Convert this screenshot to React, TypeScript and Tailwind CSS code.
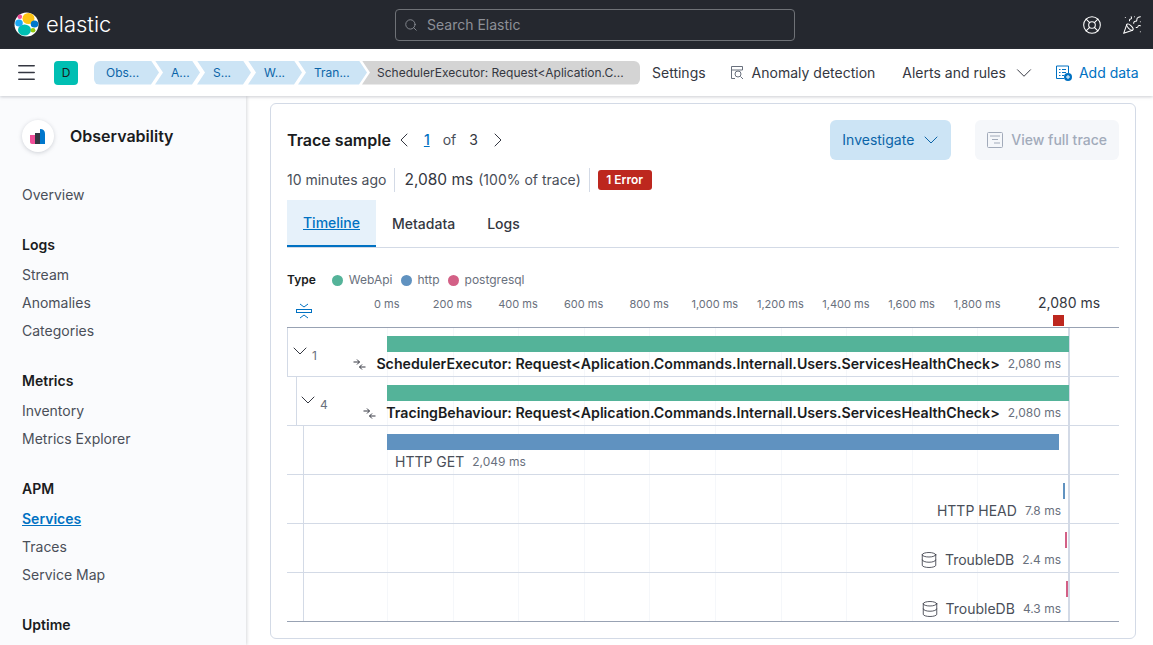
import * as React from "react";
import { ChevronDown, ChevronLeft, ChevronRight, Database, LifeBuoy, Menu, PartyPopper, Search } from "lucide-react";

const crumbs = [
  { label: "Obs...", cls: "w-[65px] pl-3 rounded-l-md [clip-path:polygon(0_0,calc(100%-8px)_0,100%_50%,calc(100%-8px)_100%,0_100%)]" },
  { label: "A...", cls: "w-[45px] -ml-[4px] pl-4 [clip-path:polygon(0_0,calc(100%-8px)_0,100%_50%,calc(100%-8px)_100%,0_100%,8px_50%)]" },
  { label: "S...", cls: "w-[54px] -ml-[3px] pl-4 [clip-path:polygon(0_0,calc(100%-8px)_0,100%_50%,calc(100%-8px)_100%,0_100%,8px_50%)]" },
  { label: "W...", cls: "w-[54px] -ml-[3px] pl-4 [clip-path:polygon(0_0,calc(100%-8px)_0,100%_50%,calc(100%-8px)_100%,0_100%,8px_50%)]" },
  { label: "Tran...", cls: "w-[69px] -ml-[4px] pl-4 [clip-path:polygon(0_0,calc(100%-8px)_0,100%_50%,calc(100%-8px)_100%,0_100%,8px_50%)]" },
];

const nav = [
  { items: ["Overview"] },
  { title: "Logs", items: ["Stream", "Anomalies", "Categories"] },
  { title: "Metrics", items: ["Inventory", "Metrics Explorer"] },
  { title: "APM", items: ["Services", "Traces", "Service Map"] },
  { title: "Uptime", items: [] },
];

const ticks = ["0 ms", "200 ms", "400 ms", "600 ms", "800 ms", "1,000 ms", "1,200 ms", "1,400 ms", "1,600 ms", "1,800 ms"];

function Logo() {
  return (
    <svg width="25" height="25" viewBox="0 0 25 25">
      <circle cx="12.5" cy="12.5" r="12" fill="#fff" />
      <ellipse cx="14.5" cy="6.5" rx="6" ry="5.5" fill="#fec514" />
      <ellipse cx="10.5" cy="18" rx="6.5" ry="5.5" fill="#00bfb3" />
      <ellipse cx="5" cy="11" rx="3.8" ry="3.6" fill="#1ba9f5" />
      <ellipse cx="5.8" cy="4.8" rx="2.3" ry="2.2" fill="#f04e98" />
      <ellipse cx="20.5" cy="12" rx="3.8" ry="3.6" fill="#0077cc" />
      <ellipse cx="19" cy="18.3" rx="2.4" ry="2.3" fill="#93c90e" />
    </svg>
  );
}

function SpanIcon() {
  return (
    <svg className="block" width="13" height="13" viewBox="0 0 13 13" fill="none" stroke="#343741" strokeWidth="1">
      <path d="M0.5 4H6.5M4 1.5L6.5 4L4 6.5" />
      <path d="M12.5 9H6.5M9 6.5L6.5 9L9 11.5" />
    </svg>
  );
}

function Row({ indent, count, icon, label, bold, duration, barLeft, barWidth, barColor, labelLeft, line }: {
  indent?: number; count?: number; icon?: "span" | "db"; label: string; bold?: boolean; duration: string;
  barLeft: string; barWidth: string; barColor: string; labelLeft?: boolean; line: string;
}) {
  return (
    <div className="relative h-[49px] pt-[8px] border-b border-[#d3dae6]">
      <div className={`absolute top-0 bottom-0 w-px bg-[#d3dae6] ${line}`} />
      {count !== undefined && (
        <div className={`absolute top-[11px] flex items-start text-xs text-[#69707d] ${indent ? "left-[9px]" : "left-[1px]"}`}>
          <ChevronDown size={24} strokeWidth={1} color="#343741" />
          <span className="mt-[9px]">{count}</span>
        </div>
      )}
      <div className={`h-4 ${barLeft} ${barWidth} ${barColor}`} />
      <div className={`flex items-center h-[20px] mt-[2px] whitespace-nowrap ${labelLeft ? "justify-start pl-[108px]" : "justify-end pr-[58px]"}`}>
        {icon === "span" && <span className="mr-[10px]"><SpanIcon /></span>}
        {icon === "db" && <Database size={18} strokeWidth={1.1} color="#343741" className="mr-[7px]" />}
        <span className={bold ? "text-[14.2px] font-semibold text-[#1a1c21]" : "text-sm text-[#4a4f59]"}>{label}</span>
        <span className="ml-[8px] text-xs text-[#69707d]">{duration}</span>
      </div>
    </div>
  );
}

export default function App() {
  return (
    <div className="flex flex-col h-[645px] w-[1153px] overflow-hidden bg-white font-['Inter',sans-serif] text-sm text-[#343741]">
      <header className="flex items-center h-[49px] shrink-0 bg-[#25282f] pl-[14px] pr-[11px]">
        <Logo />
        <span className="ml-[7px] w-[349px] text-[22px] font-light leading-none -mt-[2px] text-white">elastic</span>
        <div className="flex items-center gap-[9px] w-[400px] h-8 px-2 border border-[#6f7277] rounded-[4px] text-[#8d9097]">
          <Search size={14} strokeWidth={1.5} />
          <span>Search Elastic</span>
        </div>
        <div className="flex items-center gap-[20px] ml-auto text-white">
          <LifeBuoy size={20} strokeWidth={1.25} />
          <PartyPopper size={20} strokeWidth={1.25} />
        </div>
      </header>

      <div className="z-20 flex items-center h-[47px] shrink-0 bg-white pl-[15px] pr-[13px] shadow-[0_1px_3px_rgba(105,112,125,0.35)]">
        <Menu size={23} strokeWidth={1.7} />
        <div className="flex items-center justify-center w-6 h-6 ml-[16px] rounded-[4px] bg-[#00bfb3] text-xs text-[#1a1c21]">D</div>
        <div className="flex items-center ml-4 text-xs">
          {crumbs.map((c) => (
            <div key={c.label} className={`flex items-center h-6 bg-[#cce4f5] text-[#0b64a8] ${c.cls}`}>{c.label}</div>
          ))}
          <div className="flex items-center w-[278px] h-6 -ml-[5px] pl-[15px] rounded-r-md bg-[#d4d4d4] text-[#343741] [clip-path:polygon(0_0,100%_0,100%_100%,0_100%,8px_50%)]">
            SchedulerExecutor: Request&lt;Aplication.C...
          </div>
        </div>
        <span className="ml-[12px]">Settings</span>
        <svg className="ml-[25px]" width="13" height="13" viewBox="0 0 13 13" fill="none" stroke="#69707d">
          <path d="M4 12.5H0.5V0.5H11.5V4M0.5 4H11.5" />
          <circle cx="7" cy="8" r="3" />
          <path d="M9.5 10.5L12 13" />
        </svg>
        <span className="ml-[8px]">Anomaly detection</span>
        <span className="ml-[27px]">Alerts and rules</span>
        <ChevronDown size={26} strokeWidth={0.9} className="ml-[5px] shrink-0" />
        <svg className="ml-[19px] shrink-0" width="16" height="16" viewBox="0 0 16 16" fill="none" stroke="#0071c2">
          <path d="M8 13.5H0.5V1H12.5V8" />
          <path d="M3 4.5H4.5M6 4.5H10M3 7.5H4.5M6 7.5H10M3 10.5H4.5M6 10.5H8" />
          <circle cx="12" cy="12" r="4" fill="#0071c2" stroke="none" />
          <path d="M12 10V14M10 12H14" stroke="#fff" />
        </svg>
        <span className="ml-[7px] text-[#0071c2] whitespace-nowrap">Add data</span>
      </div>

      <div className="flex flex-1 min-h-0">
        <aside className="z-10 w-[246px] shrink-0 bg-[#fafbfd] pl-[22px] pt-[24px] shadow-[1px_0_3px_rgba(105,112,125,0.25)]">
          <div className="flex items-center gap-4">
            <div className="flex items-center justify-center w-8 h-8 rounded-full bg-white shadow-[0_1px_4px_rgba(105,112,125,0.3)]">
              <svg width="16" height="15" viewBox="0 0 16 15">
                <path d="M0 6H5V15H2Q0 15 0 13Z" fill="#f04e98" />
                <rect x="5" y="4" width="5" height="11" fill="#343741" />
                <path d="M10 0Q15 0 15 5V15H10Z" fill="#0077cc" />
              </svg>
            </div>
            <span className="text-base font-semibold text-[#1a1c21] -mt-[1px]">Observability</span>
          </div>
          <div className="flex flex-col gap-[25px] mt-[29px]">
            {nav.map((section, i) => (
              <div key={i}>
                {section.title && <div className="h-[27px] pt-[1px] font-semibold text-[#1a1c21]">{section.title}</div>}
                {section.items.map((item) => (
                  <div key={item} className={item === "Services" ? "flex items-center h-[28px] font-semibold text-[#0071c2] underline" : "flex items-center h-[28px] text-[#4a4f59]"}>
                    {item}
                  </div>
                ))}
              </div>
            ))}
          </div>
        </aside>

        <main className="flex-1 min-w-0 pl-[24px] pr-[17px] pt-[7px]">
          <section className="h-[536px] border border-[#d3dae6] rounded-md px-4 pt-4">
            <div className="flex items-start">
              <div className="flex items-center h-10">
                <span className="text-base font-semibold text-[#1a1c21]">Trace sample</span>
                <ChevronLeft size={24} strokeWidth={1} className="ml-px" />
                <span className="ml-[8px] font-medium text-[#0071c2] underline">1</span>
                <span className="ml-[13px] text-[#4a4f59]">of</span>
                <span className="ml-[13px]">3</span>
                <ChevronRight size={24} strokeWidth={1} className="ml-[8px]" />
              </div>
              <div className="flex items-center h-10 ml-auto rounded-md bg-[#cce4f5] pl-3 pr-2 text-[#0b64a8]">
                Investigate
                <ChevronDown size={24} strokeWidth={1} className="ml-[5px]" />
              </div>
              <div className="flex items-center gap-2 h-10 ml-6 rounded-md bg-[#f5f7fa] px-3 font-medium text-[#a2abba]">
                <svg width="16" height="16" viewBox="0 0 16 16" fill="none" stroke="#a2abba">
                  <rect x="0.5" y="0.5" width="15" height="15" rx="1" />
                  <path d="M3 4H13M5 7.5H11M7 11H13" />
                </svg>
                View full trace
              </div>
            </div>

            <div className="flex items-center h-[24px] mt-2">
              <span className="text-[#4a4f59]">10 minutes ago</span>
              <div className="w-px h-6 ml-2 mr-[9px] bg-[#d3dae6]" />
              <span className="text-[15.5px]">2,080 ms</span>
              <span className="ml-[5px] text-[#4a4f59]">(100% of trace)</span>
              <div className="w-px h-6 mx-2 bg-[#d3dae6]" />
              <span className="flex items-center h-5 rounded-[3px] bg-[#bd271e] px-[8.5px] text-xs font-semibold text-white">1 Error</span>
            </div>

            <div className="flex items-stretch h-[48px] mt-[8px] border-b border-[#d3dae6]">
              <div className="flex items-center w-[89px] justify-center bg-[#e6f1fa] border-b-2 border-[#0071c2] font-medium text-[#0071c2] underline">Timeline</div>
              <div className="flex items-center px-4 font-medium">Metadata</div>
              <div className="flex items-center px-4 font-medium">Logs</div>
            </div>

            <div className="flex items-center h-[16px] mt-[24px] text-xs">
              <span className="font-semibold text-[#1a1c21]">Type</span>
              <span className="w-[11px] h-[11px] ml-[16px] rounded-full bg-[#54b399]" />
              <span className="ml-[6px] text-[#69707d]">WebApi</span>
              <span className="w-[11px] h-[11px] ml-[8px] rounded-full bg-[#6092c0]" />
              <span className="ml-[6px] text-[#69707d]">http</span>
              <span className="w-[11px] h-[11px] ml-[8px] rounded-full bg-[#d36086]" />
              <span className="ml-[6px] text-[#69707d]">postgresql</span>
            </div>

            <div className="relative flex h-[31px] mt-[9px] border-b border-[#98a2b3]">
              <svg className="ml-[9px] mt-[6px] shrink-0" width="16" height="16" viewBox="0 0 16 16" fill="none" stroke="#0071c2">
                <path d="M4 1L8 4L12 1" />
                <rect x="0.5" y="6.5" width="15" height="3" />
                <path d="M4 15L8 12L12 15" />
              </svg>
              <div className="flex ml-[42px] text-[11px] text-[#69707d]">
                {ticks.map((t) => (
                  <div key={t} className="w-[65.6px] text-center whitespace-nowrap">{t}</div>
                ))}
              </div>
              <div className="absolute left-[751px] top-[-4px] text-sm text-[#343741] whitespace-nowrap">2,080 ms</div>
              <div className="absolute left-[766px] top-[18px] w-[11px] h-[11px] bg-[#bd271e]" />
            </div>

            <div className="relative">
              <div className="absolute inset-y-0 left-[100px] grid grid-cols-[repeat(10,65.6px)] pointer-events-none">
                {ticks.map((t) => (
                  <div key={t} className="border-l border-[#f5f7fa]" />
                ))}
              </div>
              <div className="absolute inset-y-0 left-[781px] w-[2px] bg-[#d3dae6]" />
              <div className="relative">
                <Row count={1} icon="span" label="SchedulerExecutor: Request<Aplication.Commands.Internall.Users.ServicesHealthCheck>" bold duration="2,080 ms" barLeft="ml-[100px]" barWidth="w-[682px]" barColor="bg-[#54b399]" line="left-0" />
                <Row indent={1} count={4} icon="span" label="TracingBehaviour: Request<Aplication.Commands.Internall.Users.ServicesHealthCheck>" bold duration="2,080 ms" barLeft="ml-[100px]" barWidth="w-[682px]" barColor="bg-[#54b399]" line="left-[9px]" />
                <Row label="HTTP GET" duration="2,049 ms" labelLeft barLeft="ml-[100px]" barWidth="w-[672px]" barColor="bg-[#6092c0]" line="left-[16px]" />
                <Row label="HTTP HEAD" duration="7.8 ms" barLeft="ml-[776px]" barWidth="w-[2px]" barColor="bg-[#6092c0]" line="left-[16px]" />
                <Row icon="db" label="TroubleDB" duration="2.4 ms" barLeft="ml-[778px]" barWidth="w-[2px]" barColor="bg-[#d36086]" line="left-[16px]" />
                <Row icon="db" label="TroubleDB" duration="4.3 ms" barLeft="ml-[779px]" barWidth="w-[2px]" barColor="bg-[#d36086]" line="left-[16px]" />
                <div className="relative h-px -mt-px bg-[#98a2b3]" />
              </div>
            </div>
          </section>
        </main>
      </div>
    </div>
  );
}
